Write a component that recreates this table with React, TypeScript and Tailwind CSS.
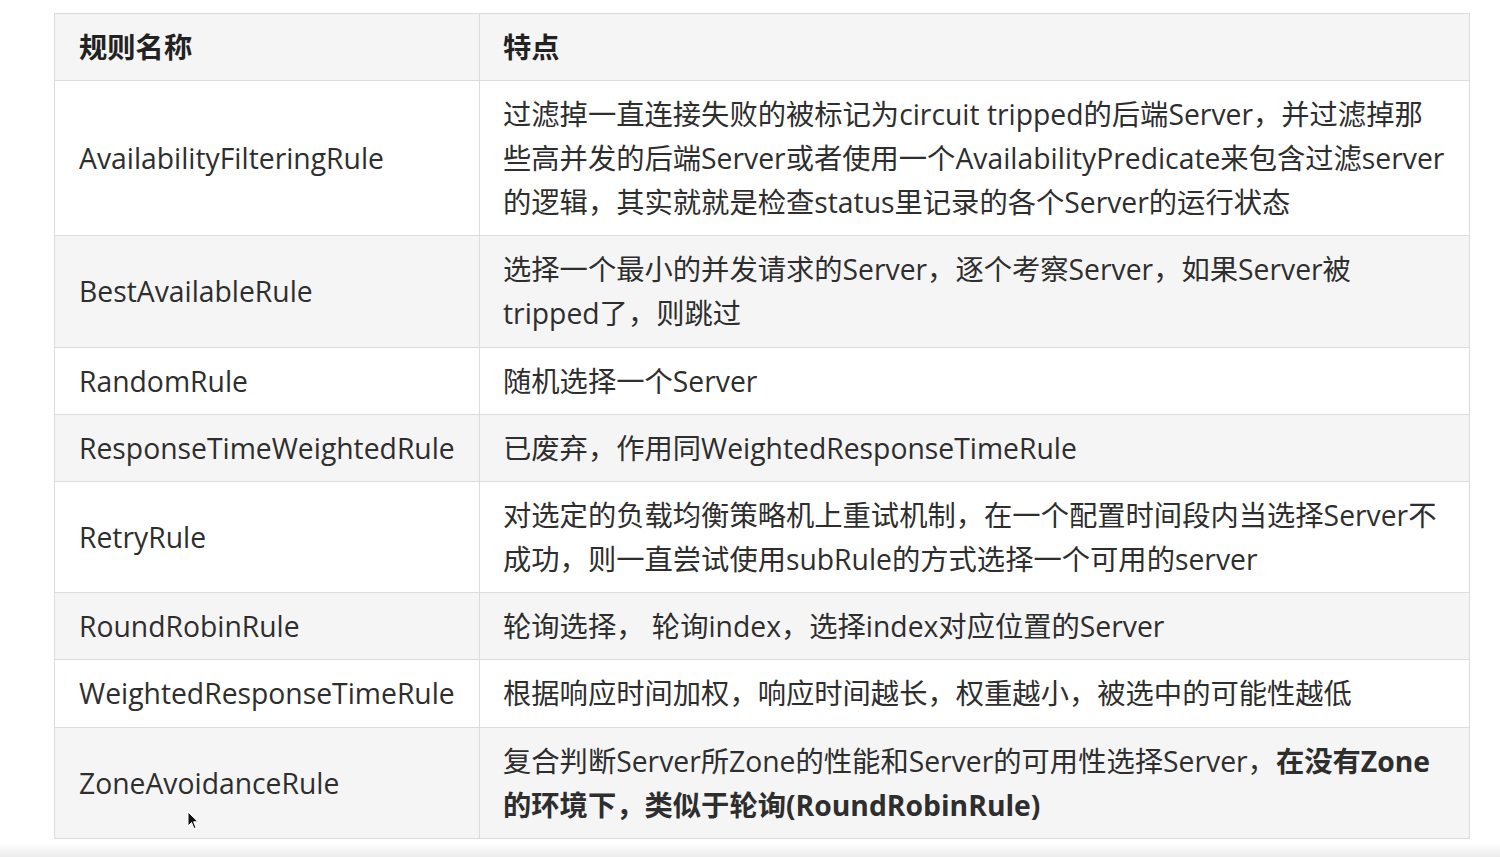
import type { ReactNode } from "react"

type Row = { name: string; lines: ReactNode[] }

const rows: Row[] = [
  {
    name: "AvailabilityFilteringRule",
    lines: [
      "过滤掉一直连接失败的被标记为circuit tripped的后端Server，并过滤掉那",
      "些高并发的后端Server或者使用一个AvailabilityPredicate来包含过滤server",
      "的逻辑，其实就就是检查status里记录的各个Server的运行状态",
    ],
  },
  {
    name: "BestAvailableRule",
    lines: ["选择一个最小的并发请求的Server，逐个考察Server，如果Server被", "tripped了，则跳过"],
  },
  { name: "RandomRule", lines: ["随机选择一个Server"] },
  { name: "ResponseTimeWeightedRule", lines: ["已废弃，作用同WeightedResponseTimeRule"] },
  {
    name: "RetryRule",
    lines: [
      "对选定的负载均衡策略机上重试机制，在一个配置时间段内当选择Server不",
      "成功，则一直尝试使用subRule的方式选择一个可用的server",
    ],
  },
  { name: "RoundRobinRule", lines: ["轮询选择， 轮询index，选择index对应位置的Server"] },
  { name: "WeightedResponseTimeRule", lines: ["根据响应时间加权，响应时间越长，权重越小，被选中的可能性越低"] },
  {
    name: "ZoneAvoidanceRule",
    lines: [
      <>
        复合判断Server所Zone的性能和Server的可用性选择Server，<strong className="font-bold">在没有Zone</strong>
      </>,
      <strong className="font-bold">的环境下，类似于轮询(RoundRobinRule)</strong>,
    ],
  },
]

function Cursor() {
  return (
    <svg className="absolute left-[187px] top-[811px]" width="12" height="20" viewBox="0 0 12 20">
      <path d="M1 1 L1 15 L4.5 11.5 L7 17.5 L9 16.6 L6.6 10.8 L11 10.8 Z" fill="#111" stroke="#fff" strokeWidth="1" />
    </svg>
  )
}

export default function App() {
  return (
    <div
      className="relative flex h-[857px] w-[1500px] flex-col overflow-hidden bg-white text-[#2e2e2e]"
      style={{ fontFamily: '"Open Sans", "Noto Sans CJK SC", sans-serif' }}
    >
      <div className="pl-[54px] pt-[13px]">
        <table className="w-[1416px] table-fixed border-collapse text-[28.3px] leading-[44px]">
          <colgroup>
            <col className="w-[425px]" />
            <col />
          </colgroup>
          <thead>
            <tr className="bg-[#f5f5f5]">
              <th className="border border-[#dcdcdc] px-[24px] py-[11.1px] text-left font-bold text-[#222]">规则名称</th>
              <th className="border border-[#dcdcdc] px-[23px] py-[11.1px] text-left font-bold text-[#222]">特点</th>
            </tr>
          </thead>
          <tbody>
            {rows.map((r, i) => (
              <tr key={r.name} className={i % 2 === 1 ? "bg-[#f5f5f5]" : "bg-white"}>
                <td className="border border-[#dcdcdc] px-[24px] py-[11.1px] align-middle">{r.name}</td>
                <td className="border border-[#dcdcdc] py-[11.1px] pl-[23px] pr-[10px] align-middle">
                  {r.lines.map((l, j) => (
                    <div key={j} className="whitespace-nowrap">
                      {l}
                    </div>
                  ))}
                </td>
              </tr>
            ))}
          </tbody>
        </table>
      </div>
      <div className="mt-auto h-[14px] bg-gradient-to-b from-white to-[#ececec]" />
      <Cursor />
    </div>
  )
}
